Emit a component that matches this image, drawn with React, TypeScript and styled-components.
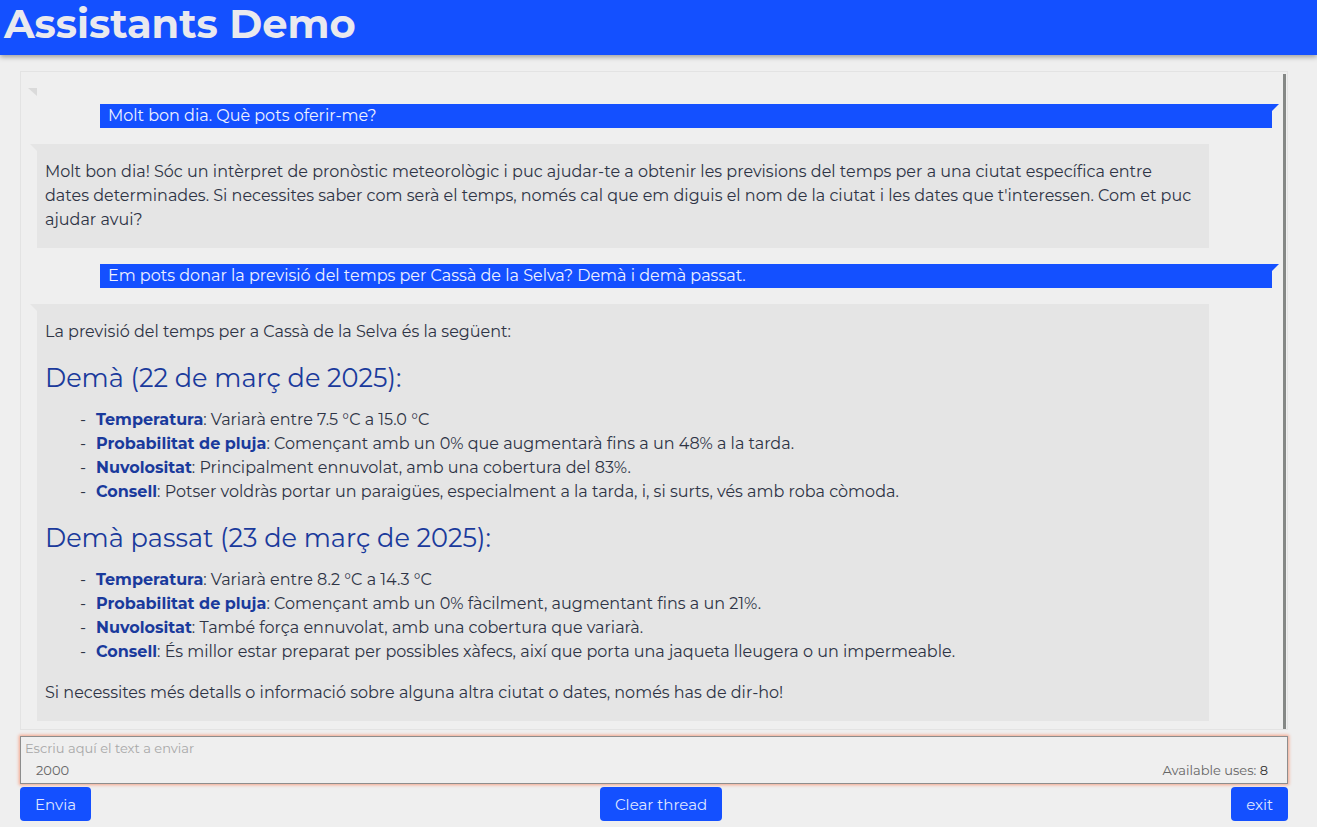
import React from "react";
import styled, { createGlobalStyle } from "styled-components";

const FONT = `"Montserrat", "Inter", "Noto Sans", sans-serif`;

const Global = createGlobalStyle`
  html, body { margin: 0; padding: 0; background: #efefef; }
  body { font-family: ${FONT}; }
  * { box-sizing: border-box; }
`;

const Header = styled.header`
  height: 55px;
  background: #1450ff;
  box-shadow: 0 2px 5px rgba(0, 0, 0, 0.35);
  padding: 4px 0 0 4px;
  position: relative;
  z-index: 1;
`;

const Title = styled.h1`
  margin: 0;
  font-size: 40px;
  font-weight: 700;
  color: #e9e9ee;
  line-height: 40px;
`;

const Main = styled.main`
  padding: 16px 29px 0 20px;
  display: flex;
  flex-direction: column;
`;

const Panel = styled.section`
  height: 659px;
  border: 1px solid #e3e3e3;
  display: flex;
`;

const MessageList = styled.div`
  flex: 1;
  display: flex;
  flex-direction: column;
  gap: 16px;
  padding: 16px 0 10px;
`;

const Thumb = styled.div`
  width: 3px;
  margin: 2px 1px 0 0;
  background: #858886;
`;

const UserBubble = styled.div`
  position: relative;
  margin: 0 11px 0 79px;
  background: #1450ff;
  color: #eef0ff;
  font-size: 16px;
  line-height: 24px;
  padding: 0 8px;
  &::after {
    content: "";
    position: absolute;
    top: 0;
    right: -7px;
    border-top: 7px solid #1450ff;
    border-right: 7px solid transparent;
  }
`;

const BotBubble = styled.div<{ $empty?: boolean }>`
  position: relative;
  margin: 0 74px 0 16px;
  background: ${(p) => (p.$empty ? "transparent" : "#e5e5e5")};
  color: #2e3445;
  font-size: 16px;
  line-height: 24px;
  padding: ${(p) => (p.$empty ? "0" : "16px 14px 16px 8px")};
  &::before {
    content: "";
    position: absolute;
    top: 0;
    left: ${(p) => (p.$empty ? "-9px" : "-7px")};
    border-top: ${(p) => (p.$empty ? "8px solid #dadada" : "7px solid #e5e5e5")};
    border-left: ${(p) => (p.$empty ? "9px" : "7px")} solid transparent;
  }
`;

const Para = styled.p`
  margin: 0;
`;

const Heading = styled.h3`
  margin: 18px 0 15px;
  font-size: 25.6px;
  line-height: 31px;
  font-weight: 400;
  color: #1a3a9c;
`;

const List = styled.ul`
  list-style: none;
  margin: 0 0 17px;
  padding: 0 0 0 35px;
`;

const Item = styled.li`
  &::before {
    content: "-";
    display: inline-block;
    width: 16px;
  }
`;

const Key = styled.strong`
  color: #1a3a9c;
  font-weight: 700;
`;

const InputBox = styled.div`
  margin-top: 6px;
  height: 48px;
  border: 1px solid #8d8d8d;
  box-shadow: 0 0 3px 1px #f5a488;
  display: flex;
  flex-direction: column;
`;

const TextArea = styled.textarea`
  flex: 1;
  border: none;
  outline: none;
  resize: none;
  background: transparent;
  font-family: ${FONT};
  font-size: 13px;
  padding: 3px 4px 0;
  color: #333;
  &::placeholder { color: #a8a8a8; }
`;

const InputFooter = styled.div`
  display: flex;
  justify-content: space-between;
  align-items: center;
  height: 22px;
  padding: 0 19px 4px 15px;
  font-size: 13px;
  color: #666;
`;

const Uses = styled.span`
  b { font-weight: 400; color: #333; }
`;

const ButtonRow = styled.div`
  margin-top: 3px;
  display: flex;
  justify-content: space-between;
`;

const Button = styled.button`
  height: 34px;
  padding: 0 15px;
  background: #1450ff;
  border: none;
  border-radius: 4px;
  color: #dfe5ff;
  font-family: ${FONT};
  font-size: 15px;
  cursor: pointer;
`;

const day1 = [
  ["Temperatura", ": Variarà entre 7.5 °C a 15.0 °C"],
  ["Probabilitat de pluja", ": Començant amb un 0% que augmentarà fins a un 48% a la tarda."],
  ["Nuvolositat", ": Principalment ennuvolat, amb una cobertura del 83%."],
  ["Consell", ": Potser voldràs portar un paraigües, especialment a la tarda, i, si surts, vés amb roba còmoda."],
];

const day2 = [
  ["Temperatura", ": Variarà entre 8.2 °C a 14.3 °C"],
  ["Probabilitat de pluja", ": Començant amb un 0% fàcilment, augmentant fins a un 21%."],
  ["Nuvolositat", ": També força ennuvolat, amb una cobertura que variarà."],
  ["Consell", ": És millor estar preparat per possibles xàfecs, així que porta una jaqueta lleugera o un impermeable."],
];

export default function App() {
  return (
    <>
      <Global />
      <Header>
        <Title>Assistants Demo</Title>
      </Header>
      <Main>
        <Panel>
          <MessageList>
            <BotBubble $empty />
            <UserBubble>Molt bon dia. Què pots oferir-me?</UserBubble>
            <BotBubble>
              Molt bon dia! Sóc un intèrpret de pronòstic meteorològic i puc ajudar-te a obtenir les previsions del temps per a una ciutat específica entre dates determinades. Si necessites saber com serà el temps, només cal que em diguis el nom de la ciutat i les dates que t'interessen. Com et puc ajudar avui?
            </BotBubble>
            <UserBubble>Em pots donar la previsió del temps per Cassà de la Selva? Demà i demà passat.</UserBubble>
            <BotBubble>
              <Para>La previsió del temps per a Cassà de la Selva és la següent:</Para>
              <Heading>Demà (22 de març de 2025):</Heading>
              <List>
                {day1.map(([k, v]) => (
                  <Item key={k}>
                    <Key>{k}</Key>
                    {v}
                  </Item>
                ))}
              </List>
              <Heading>Demà passat (23 de març de 2025):</Heading>
              <List>
                {day2.map(([k, v]) => (
                  <Item key={k}>
                    <Key>{k}</Key>
                    {v}
                  </Item>
                ))}
              </List>
              <Para>Si necessites més detalls o informació sobre alguna altra ciutat o dates, només has de dir-ho!</Para>
            </BotBubble>
          </MessageList>
          <Thumb />
        </Panel>
        <InputBox>
          <TextArea placeholder="Escriu aquí el text a enviar" />
          <InputFooter>
            <span>2000</span>
            <Uses>
              Available uses: <b>8</b>
            </Uses>
          </InputFooter>
        </InputBox>
        <ButtonRow>
          <Button>Envia</Button>
          <Button>Clear thread</Button>
          <Button>exit</Button>
        </ButtonRow>
      </Main>
    </>
  );
}
